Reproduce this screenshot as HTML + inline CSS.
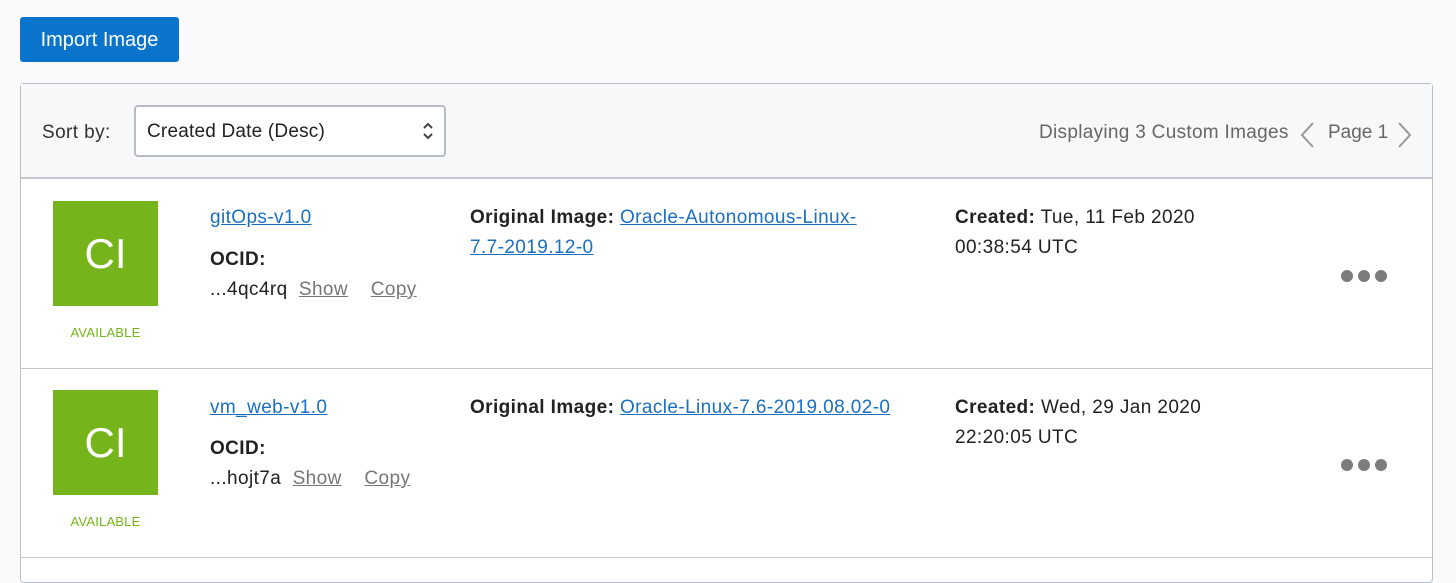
<!DOCTYPE html>
<html><head><style>
*{margin:0;padding:0;box-sizing:border-box}
body{width:1456px;height:565px;background:#fafafa;font-family:"Liberation Sans",sans-serif;color:#222;position:relative;overflow:hidden}
.a{position:absolute;white-space:nowrap}
.btn{left:20px;top:17px;width:159px;height:45px;background:#0a73cc;border-radius:3px;color:#fff;font-size:20px;line-height:46px;text-align:center}
.box{left:20px;top:83px;width:1413px;height:500px;border:1px solid #b8bfc6;border-radius:4px;background:#fff}
.hdr{left:21px;top:84px;width:1411px;height:95px;background:#f7f8f9;border-bottom:2px solid #c3c8ce}
.sel{left:134px;top:105px;width:312px;height:52px;border:2px solid #b7bcc2;border-radius:4px;background:#fff;font-size:19px;padding-left:11px;line-height:50px;color:#222;letter-spacing:0.2px}
.row{left:21px;width:1411px;height:1px;background:#c3c8ce}
.ci{width:105px;height:105px;background:#76b41c;color:#fff;font-size:42px;line-height:105px;text-align:center;font-weight:300}
.av{color:#76b41c;font-size:13px;width:105px;text-align:center;letter-spacing:0.2px}
.lk{color:#1a6fc0;text-decoration:underline}
.f{font-size:19px;letter-spacing:0.4px}
.g{color:#777;text-decoration:underline}
.dots{width:46px;height:12px}
.dots i{display:inline-block;width:12px;height:12px;border-radius:50%;background:#7c7c7c;margin-right:5px}
.lt{font-size:19px;color:#666}
</style></head><body>
<div class="a btn">Import Image</div>
<div class="a box"></div>
<div class="a hdr"></div>
<div class="a f" style="left:42px;top:122px;color:#333">Sort by:</div>
<div class="a sel">Created Date (Desc)<svg style="position:absolute;right:10px;top:15px" width="12" height="18" viewBox="0 0 12 18"><path d="M2 6 L6 2 L10 6 M2 12 L6 16 L10 12" fill="none" stroke="#444" stroke-width="2"/></svg></div>
<div class="a lt" style="left:1039px;top:122px;letter-spacing:0.3px">Displaying 3 Custom Images</div>
<svg class="a" style="left:1298px;top:121px" width="20" height="28" viewBox="0 0 20 28"><path d="M15 2 L4 14 L15 26" fill="none" stroke="#999" stroke-width="2"/></svg>
<div class="a lt" style="left:1328px;top:122px">Page 1</div>
<svg class="a" style="left:1395px;top:121px" width="20" height="28" viewBox="0 0 20 28"><path d="M4 2 L15 14 L4 26" fill="none" stroke="#999" stroke-width="2"/></svg>

<div class="a ci" style="left:53px;top:201px">CI</div>
<div class="a av" style="left:53px;top:325px">AVAILABLE</div>
<div class="a f lk" style="left:210px;top:207px">gitOps-v1.0</div>
<div class="a f" style="left:210px;top:249px;font-weight:bold">OCID:</div>
<div class="a f" style="left:210px;top:279px">...4qc4rq&nbsp; <span class="g">Show</span>&nbsp;&nbsp;&nbsp; <span class="g">Copy</span></div>
<div class="a f" style="left:470px;top:207px"><b>Original Image:</b> <span class="lk">Oracle-Autonomous-Linux-</span></div>
<div class="a f lk" style="left:470px;top:237px">7.7-2019.12-0</div>
<div class="a f" style="left:955px;top:207px"><b>Created:</b> Tue, 11 Feb 2020</div>
<div class="a f" style="left:955px;top:237px">00:38:54 UTC</div>
<div class="a dots" style="left:1341px;top:269px"><i></i><i></i><i></i></div>
<div class="a row" style="top:368px"></div>

<div class="a ci" style="left:53px;top:390px">CI</div>
<div class="a av" style="left:53px;top:514px">AVAILABLE</div>
<div class="a f lk" style="left:210px;top:397px">vm_web-v1.0</div>
<div class="a f" style="left:210px;top:438px;font-weight:bold">OCID:</div>
<div class="a f" style="left:210px;top:468px">...hojt7a&nbsp; <span class="g">Show</span>&nbsp;&nbsp;&nbsp; <span class="g">Copy</span></div>
<div class="a f" style="left:470px;top:397px"><b>Original Image:</b> <span class="lk">Oracle-Linux-7.6-2019.08.02-0</span></div>
<div class="a f" style="left:955px;top:397px"><b>Created:</b> Wed, 29 Jan 2020</div>
<div class="a f" style="left:955px;top:427px">22:20:05 UTC</div>
<div class="a dots" style="left:1341px;top:458px"><i></i><i></i><i></i></div>
<div class="a row" style="top:557px"></div>
</body></html>
